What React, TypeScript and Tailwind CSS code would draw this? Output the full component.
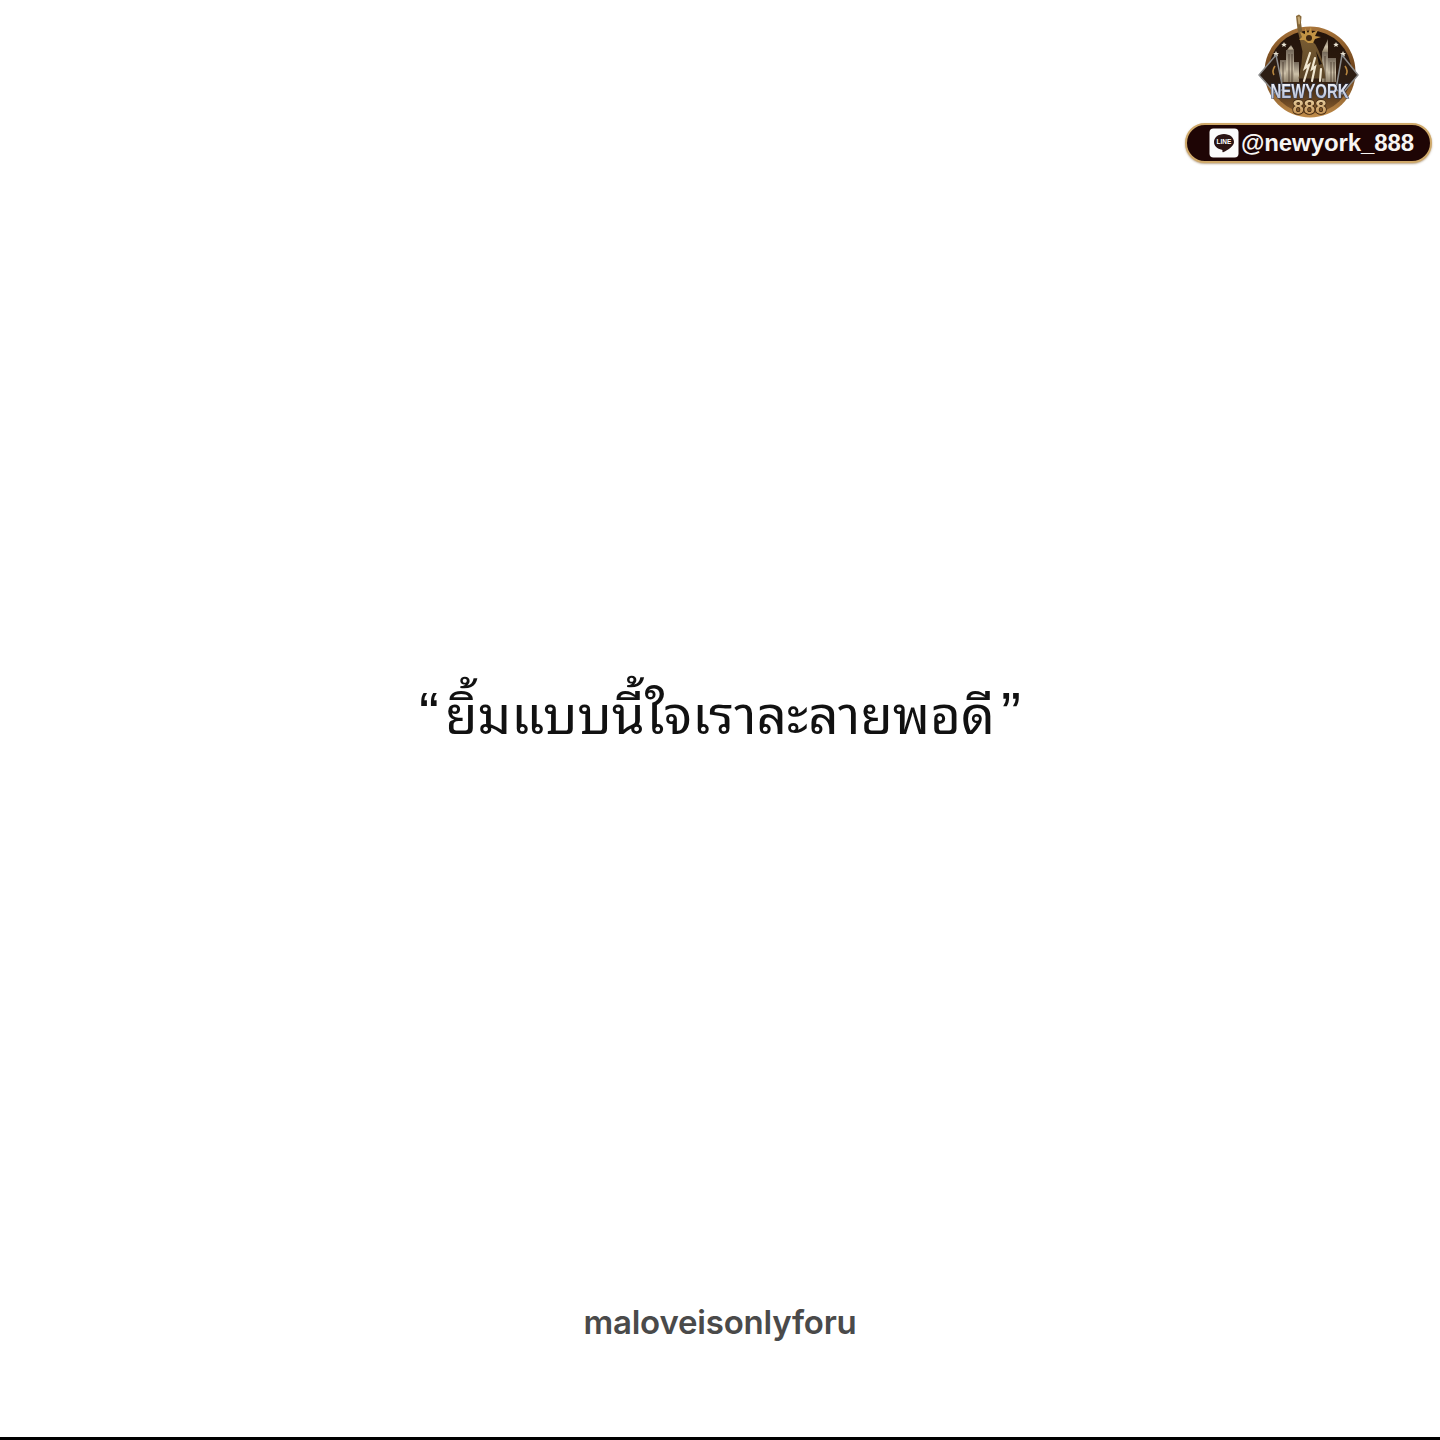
import React from "react";

function LineIcon() {
  return (
    <svg width="30" height="30" viewBox="0 0 30 30" className="shrink-0">
      <rect x="0.5" y="0.5" width="29" height="29" rx="4" fill="#fbfbfb" />
      <path
        d="M15 6c-5.800 0-10 3.600-10 8c0 4 3.300 7 7.800 7.700c.9.200.7 1.100.6 1.800c-.1.700.4 1 1.100.6c3-1.600 10.500-5.600 10.500-10.100c0-4.400-4.200-8-10-8z"
        fill="#2a1414"
      />
      <text x="15" y="16.300" textAnchor="middle" fontSize="6.500" fontWeight="700" fill="#fff" fontFamily="Liberation Sans, sans-serif">
        LINE
      </text>
    </svg>
  );
}

function Logo() {
  return (
    <svg width="110" height="110" viewBox="0 0 110 110" className="block overflow-visible blur-[0.4px]">
      <defs>
        <linearGradient id="ring" x1="0" y1="0" x2="0" y2="1">
          <stop offset="0" stopColor="#a8743a" />
          <stop offset="0.5" stopColor="#6a4019" />
          <stop offset="1" stopColor="#c08c4a" />
        </linearGradient>
        <linearGradient id="sky" x1="0" y1="0" x2="0" y2="1">
          <stop offset="0" stopColor="#22130a" />
          <stop offset="0.6" stopColor="#2f1c0f" />
          <stop offset="1" stopColor="#8a5f2e" />
        </linearGradient>
        <linearGradient id="build" x1="0" y1="0" x2="0" y2="1">
          <stop offset="0" stopColor="#74685a" />
          <stop offset="0.6" stopColor="#cdc1a9" />
          <stop offset="1" stopColor="#8f816a" />
        </linearGradient>
        <linearGradient id="robe" x1="0" y1="0" x2="0" y2="1">
          <stop offset="0" stopColor="#8a6a3a" />
          <stop offset="1" stopColor="#5a4426" />
        </linearGradient>
        <linearGradient id="word" x1="0" y1="0" x2="0" y2="1">
          <stop offset="0" stopColor="#ffffff" />
          <stop offset="1" stopColor="#aab4d0" />
        </linearGradient>
        <linearGradient id="eights" x1="0" y1="0" x2="0" y2="1">
          <stop offset="0" stopColor="#f3e0b4" />
          <stop offset="1" stopColor="#bb8442" />
        </linearGradient>
      </defs>

      {/* badge */}
      <circle cx="56" cy="62" r="45.500" fill="url(#ring)" />
      <circle cx="56" cy="62" r="41.500" fill="url(#sky)" />

      {/* skyline */}
      <g fill="url(#build)">
        <rect x="26" y="50" width="6" height="22" />
        <rect x="32" y="40" width="8" height="32" />
        <path d="M33 40l4-5 3 5z" />
        <rect x="40" y="52" width="5" height="20" />
        <rect x="68" y="42" width="6" height="30" />
        <path d="M68 42l6-13 0 13z" />
        <rect x="74" y="48" width="8" height="24" />
      </g>
      <g stroke="#3a2a1c" strokeWidth="0.7">
        <path d="M35 44v28M38 44v28M29 52v20M71 46v26M77 52v20M80 52v20" />
      </g>

      {/* stars */}
      <g fill="#e8e2d2">
        <path d="M22 41l.9 2 2.100.2-1.600 1.300.6 2.100-2-1.100-2 1.100.6-2.100-1.600-1.300 2.100-.2z" />
        <path d="M30 32l.8 1.800 1.900.2-1.400 1.200.5 1.900-1.800-1-1.800 1 .5-1.900-1.400-1.200 1.900-.2z" />
        <path d="M89 41l.9 2 2.100.2-1.600 1.300.6 2.100-2-1.100-2 1.100.6-2.100-1.600-1.300 2.100-.2z" />
        <path d="M82 32l.8 1.800 1.900.2-1.400 1.200.5 1.900-1.800-1-1.800 1 .5-1.900-1.400-1.200 1.900-.2z" />
      </g>

      {/* statue */}
      <path d="M42 6l3-1.500 2.500 2-.5 6 1.500 11 3 5 4-4 4 1-1 6 3 3 3 6 3 8 3 12 1 8-27 0 3-15 1-12-2-9-3-13z" fill="url(#robe)" />
      <path d="M43.500 7l2-.8.8 3-.5 5-1.200 0z" fill="#c4a874" />
      <g stroke="#efe6d0" strokeWidth="2.200" fill="none" strokeLinecap="round">
        <path d="M50 71l5-16-4 3 5-15" />
        <path d="M58 71l3-14-3 2 3-11" />
        <path d="M66 71l1-12" />
      </g>
      <path d="M62 41l6 13-3 1z" fill="#1d120a" />
      <path d="M46 22l5 2 0-6 3 5 3-6 1 6 6-3-3 6 6 1-6 2-2 4-5 0-4-3-5 0 3-3z" fill="#c29445" />
      <circle cx="55" cy="28" r="3" fill="#3f2812" />

      {/* wings */}
      <path d="M5 65L22 45 29 79 22 84z" fill="#2c1d13" stroke="#8c8c8c" strokeWidth="1.500" strokeLinejoin="round" />
      <path d="M104 65L88 45 82 79 88 84z" fill="#2c1d13" stroke="#8c8c8c" strokeWidth="1.500" strokeLinejoin="round" />
      <path d="M21 56c-2 3-3 6-1 9M91 56c2 3 3 6 1 9" stroke="#b8873f" strokeWidth="1.600" fill="none" />

      {/* wordmark */}
      <text
        x="55.500"
        y="87.500"
        textAnchor="middle"
        fontSize="20"
        fontWeight="700"
        textLength="78"
        lengthAdjust="spacingAndGlyphs"
        fontFamily="Liberation Sans, sans-serif"
        fill="url(#word)"
        stroke="#33415f"
        strokeWidth="1.200"
        paintOrder="stroke"
      >
        NEWYORK
      </text>
      <text
        x="55.500"
        y="103.500"
        textAnchor="middle"
        fontSize="20"
        fontWeight="700"
        textLength="34"
        lengthAdjust="spacingAndGlyphs"
        fontFamily="Liberation Sans, sans-serif"
        fill="url(#eights)"
        stroke="#3d2510"
        strokeWidth="1.400"
        paintOrder="stroke"
      >
        888
      </text>
    </svg>
  );
}

export default function App() {
  return (
    <div className="flex h-[1440px] w-[1440px] flex-col overflow-hidden bg-white font-['Liberation_Sans',sans-serif]">
      <header className="flex h-[634px] shrink-0 flex-col items-end pt-[10px] pr-[8px]">
        <div className="flex w-[247px] flex-col items-center">
          <Logo />
          <div className="mt-[3px] flex h-[40px] w-[247px] items-center rounded-full border-2 border-[#cfa96a] bg-[#1e0505] pl-[22px] shadow-[0_1px_2px_rgba(120,80,30,0.5)]">
            <LineIcon />
            <span className="ml-[2px] text-[24px] leading-none font-bold tracking-[-0.1px] whitespace-nowrap text-[#f7f5f2]">
              @newyork_888
            </span>
          </div>
        </div>
      </header>

      <main className="flex h-[160px] shrink-0 items-center justify-center">
        <p className="flex items-baseline text-[53px] leading-none font-normal whitespace-nowrap text-[#111] font-['Liberation_Sans','Noto_Sans_Thai_Looped','Loma','Garuda','Norasi',sans-serif]">
          <span className="text-[60px]">“</span>
          <span className="mx-[6px]">ยิ้มแบบนี้ใจเราละลายพอดี</span>
          <span className="text-[60px]">”</span>
        </p>
      </main>

      <footer className="flex flex-1 flex-col">
        <div className="flex flex-1 items-start justify-center pt-[506px]">
          <span className="font-['Inter',sans-serif] text-[33px] leading-[44px] font-semibold tracking-[-0.2px] text-[#4a4a4a]">maloveisonlyforu</span>
        </div>
        <div className="h-[3px] w-full bg-black" />
      </footer>
    </div>
  );
}
